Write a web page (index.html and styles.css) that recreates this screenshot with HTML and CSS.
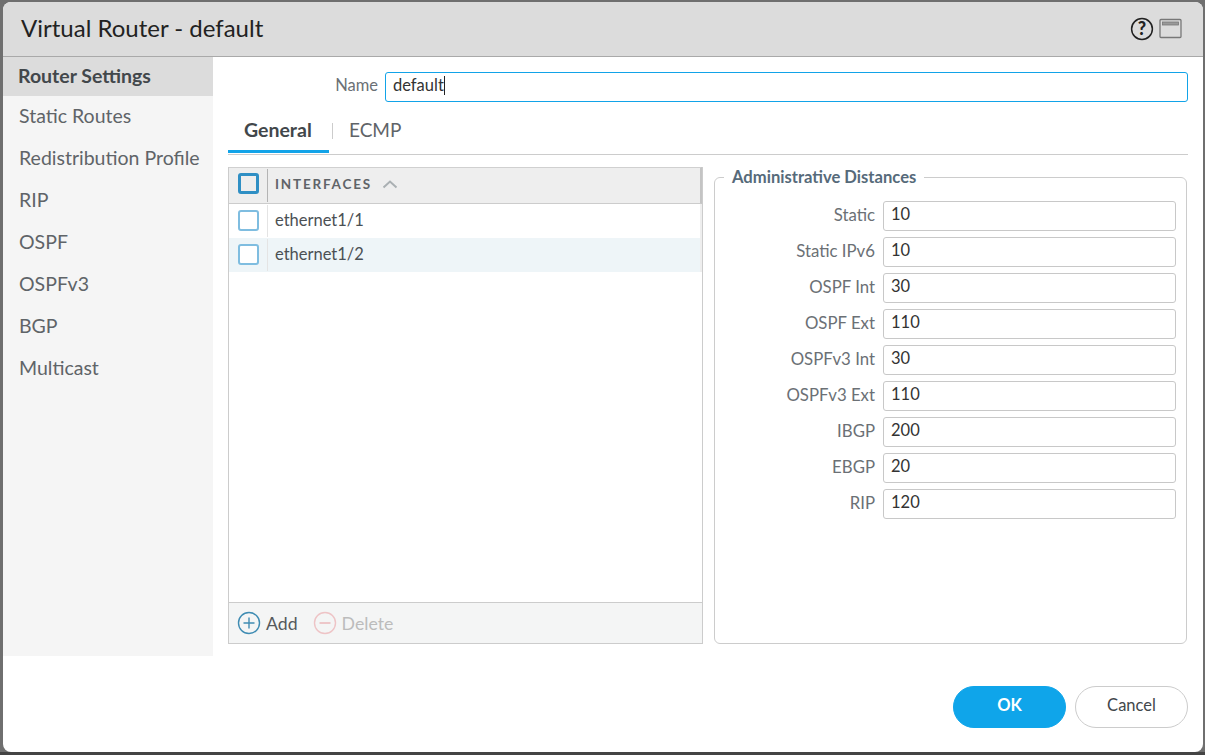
FILE: index.html
```html
<!DOCTYPE html>
<html lang="en">
<head>
<meta charset="UTF-8" />
<title>Virtual Router - default</title>
<link rel="stylesheet" href="styles.css">
</head>
<body>

<div class="dialog">
  <header class="dialog-header">
    <h1>Virtual Router - default</h1>
    <div class="header-icons">
      <svg width="24" height="24" viewBox="0 0 24 24" class="help-icon">
        <circle cx="12" cy="12" r="10.4" fill="none" stroke="#222" stroke-width="1.5"/>
        <text x="12" y="18" text-anchor="middle" class="help-mark">?</text>
      </svg>
      <svg width="24" height="22" viewBox="0 0 24 22">
        <rect x="1" y="1.5" width="21" height="18" rx="1" fill="none" stroke="#777" stroke-width="1.3"/>
        <rect x="3.5" y="4" width="16" height="3" fill="#999" stroke="#777" stroke-width="0.8"/>
      </svg>
    </div>
  </header>

  <div class="dialog-body">
    <nav class="sidebar">
      <a class="nav-item active">Router Settings</a>
      <a class="nav-item">Static Routes</a>
      <a class="nav-item">Redistribution Profile</a>
      <a class="nav-item">RIP</a>
      <a class="nav-item">OSPF</a>
      <a class="nav-item">OSPFv3</a>
      <a class="nav-item">BGP</a>
      <a class="nav-item">Multicast</a>
    </nav>

    <main class="content">
      <div class="name-row">
        <label>Name</label>
        <div class="name-input">default<span class="caret"></span></div>
      </div>

      <div class="tabs">
        <div class="tab active">General</div>
        <span class="tab-sep"></span>
        <div class="tab">ECMP</div>
      </div>

      <div class="panels">
        <section class="iface-table">
          <div class="iface-head">
            <div class="check-cell"><span class="check head-check"></span></div>
            <div class="iface-title">
              INTERFACES
              <svg width="16" height="10" viewBox="0 0 16 10"><path d="M1.5 8.5 L8 2.5 L14.5 8.5" fill="none" stroke="#aab0b3" stroke-width="2"/></svg>
            </div>
          </div>
          <div class="iface-row">
            <div class="check-cell"><span class="check"></span></div>
            <div class="iface-name">ethernet1/1</div>
          </div>
          <div class="iface-row alt">
            <div class="check-cell"><span class="check"></span></div>
            <div class="iface-name">ethernet1/2</div>
          </div>
          <div class="iface-spacer"></div>
          <div class="iface-foot">
            <span class="foot-btn">
              <svg width="24" height="24" viewBox="0 0 24 24">
                <circle cx="12" cy="12" r="10.5" fill="none" stroke="#3f8cb3" stroke-width="1.4"/>
                <path d="M12 6.5 V17.5 M6.5 12 H17.5" stroke="#3f8cb3" stroke-width="1.4"/>
              </svg>
              Add
            </span>
            <span class="foot-btn disabled">
              <svg width="24" height="24" viewBox="0 0 24 24">
                <circle cx="12" cy="12" r="10.5" fill="none" stroke="#eec4c6" stroke-width="1.4"/>
                <path d="M6.5 12 H17.5" stroke="#eab4b6" stroke-width="1.4"/>
              </svg>
              Delete
            </span>
          </div>
        </section>

        <fieldset class="distances">
          <legend>Administrative Distances</legend>
          <div class="dist-row"><label>Static</label><div class="dist-input">10</div></div>
          <div class="dist-row"><label>Static IPv6</label><div class="dist-input">10</div></div>
          <div class="dist-row"><label>OSPF Int</label><div class="dist-input">30</div></div>
          <div class="dist-row"><label>OSPF Ext</label><div class="dist-input">110</div></div>
          <div class="dist-row"><label>OSPFv3 Int</label><div class="dist-input">30</div></div>
          <div class="dist-row"><label>OSPFv3 Ext</label><div class="dist-input">110</div></div>
          <div class="dist-row"><label>IBGP</label><div class="dist-input">200</div></div>
          <div class="dist-row"><label>EBGP</label><div class="dist-input">20</div></div>
          <div class="dist-row"><label>RIP</label><div class="dist-input">120</div></div>
        </fieldset>
      </div>
    </main>
  </div>

  <footer class="dialog-footer">
    <button class="btn btn-primary">OK</button>
    <button class="btn">Cancel</button>
  </footer>
</div>

</body>
</html>
```

FILE: styles.css
```css
* {
  box-sizing: border-box;
}
html, body {
  height: 100%;
}
body {
  margin: 0;
  padding: 2px 2px 3px 3px;
  background: linear-gradient(#6f6f6f 752px, #444 752px);
  font-family: "Lato", "Liberation Sans", sans-serif;
  color: #333;
  overflow: hidden;
}
.dialog {
  height: 750px;
  background: #fff;
  border-radius: 8px;
  overflow: hidden;
  display: flex;
  flex-direction: column;
}
.dialog-header {
  height: 55px;
  flex: none;
  background: #dcdcdc;
  border-bottom: 1px solid #a9a9a9;
  display: flex;
  align-items: center;
  justify-content: space-between;
  padding: 0 20px 4px 18px;
}
.dialog-header h1 {
  margin: 0;
  font-size: 24px;
  font-weight: 400;
  color: #222;
}
.header-icons {
  display: flex;
  align-items: center;
  gap: 5px;
  padding-top: 3px;
}
.help-mark {
  font-size: 18px;
  font-weight: 900;
  fill: #222;
}
.dialog-body {
  height: 599px;
  flex: none;
  display: flex;
}
.sidebar {
  width: 210px;
  flex: none;
  background: #f5f5f5;
}
.nav-item {
  display: block;
  height: 42px;
  line-height: 40px;
  padding-left: 16px;
  font-size: 19.5px;
  color: #5f6468;
}
.nav-item.active {
  height: 39px;
  line-height: 37px;
  padding-left: 15px;
  background: #dcdcdc;
  font-weight: 700;
  color: #42474b;
}
.content {
  flex: 1;
  padding: 15px 15px 12px 15px;
  display: flex;
  flex-direction: column;
}
.name-row {
  display: flex;
  align-items: center;
  justify-content: flex-end;
  gap: 7px;
}
.name-row label {
  font-size: 16.5px;
  padding-bottom: 4px;
  color: #6b7075;
}
.name-input {
  width: 803px;
  height: 30px;
  border: 1px solid #12a3e8;
  border-radius: 3px;
  padding-left: 7px;
  font-size: 16.5px;
  line-height: 24px;
  color: #333;
}
.caret {
  display: inline-block;
  width: 1px;
  height: 19px;
  background: #222;
  vertical-align: -4px;
}
.tabs {
  margin-top: 10px;
  height: 43px;
  display: flex;
  align-items: flex-start;
  border-bottom: 1px solid #ccc;
}
.tab {
  height: 41px;
  line-height: 36px;
  font-size: 19px;
  color: #5f6468;
  padding: 0 17px 0 16px;
}
.tab.active {
  width: 101px;
  padding-left: 16px;
  font-size: 19.5px;
  font-weight: 700;
  color: #42474b;
  border-bottom: 3px solid #12a3e8;
}
.tab-sep {
  width: 1px;
  height: 16px;
  margin: 11px 0 0 3px;
  background: #ccc;
}
.panels {
  margin-top: 12px;
  flex: 1;
  display: flex;
  gap: 11px;
  min-height: 0;
}
.iface-table {
  width: 475px;
  border: 1px solid #ccc;
  border-top: none;
  display: flex;
  flex-direction: column;
}
.iface-head {
  height: 37px;
  flex: none;
  background: #eeeeee;
  border-top: 1px solid #d0d0d0;
  border-bottom: 1px solid #ccc;
  border-right: 2px solid #c4c4c4;
  display: flex;
}
.check-cell {
  width: 39px;
  flex: none;
  display: flex;
  align-items: center;
  padding: 0 0 2px 9px;
  position: relative;
}
.iface-head .check-cell {
  padding-bottom: 5px;
}
.check-cell::after {
  content: "";
  position: absolute;
  right: 0;
  top: 1px;
  bottom: 1px;
  width: 1px;
  background: #e4e4e4;
}
.iface-head .check-cell::after {
  background: #b4b4b4;
}
.check {
  width: 21px;
  height: 21px;
  background: #fff;
  border: 2px solid #7fbde0;
  border-radius: 3px;
}
.head-check {
  background: #eeeeee;
  border-color: #2f8fc4;
  border-width: 3px;
}
.iface-title {
  flex: 1;
  display: flex;
  align-items: center;
  gap: 10px;
  padding: 0 0 3px 7px;
  font-size: 13.5px;
  font-weight: 700;
  letter-spacing: 1.8px;
  color: #5f6468;
}
.iface-row {
  height: 34px;
  flex: none;
  display: flex;
  border-right: 2px solid #eeeeee;
}
.iface-row.alt {
  background: #eef5f8;
}
.iface-name {
  padding-left: 7px;
  font-size: 16.5px;
  line-height: 33px;
  color: #4b5054;
}
.iface-spacer {
  flex: 1;
}
.iface-foot {
  height: 41px;
  flex: none;
  background: #f4f5f5;
  border-top: 1px solid #ccc;
  display: flex;
  align-items: center;
  gap: 15px;
  padding-left: 8px;
  font-size: 17.7px;
}
.foot-btn {
  display: flex;
  align-items: center;
  gap: 5px;
  color: #55595c;
}
.foot-btn.disabled {
  color: #bcbcbc;
}
.distances {
  flex: 1;
  margin: 0 1px 0 0;
  padding: 14px 10px 0 0;
  border: 1px solid #ccc;
  border-radius: 6px;
  min-width: 0;
}
.distances legend {
  margin-left: 9px;
  padding: 0 8px;
  font-size: 16.6px;
  font-weight: 700;
  color: #566a7a;
}
.dist-row {
  display: flex;
  align-items: center;
  justify-content: flex-end;
  gap: 8px;
  height: 30px;
  margin-bottom: 6px;
}
.dist-row label {
  font-size: 16.8px;
  padding-bottom: 4px;
  color: #6b7075;
}
.dist-input {
  width: 293px;
  height: 30px;
  border: 1px solid #c8c8c8;
  border-radius: 3px;
  padding-left: 7px;
  font-size: 16.5px;
  line-height: 24px;
  color: #333;
}
.dialog-footer {
  flex: 1;
  display: flex;
  justify-content: flex-end;
  align-items: flex-start;
  gap: 9px;
  padding: 30px 15px 0 0;
}
.btn {
  width: 113px;
  height: 42px;
  border: 1px solid #ccc;
  border-radius: 21px;
  background: #fff;
  padding: 0 0 4px;
  font-family: inherit;
  font-size: 16.5px;
  color: #42474b;
}
.btn-primary {
  background: #0fa5ea;
  border-color: #0fa5ea;
  color: #fff;
  font-weight: 700;
}
```
